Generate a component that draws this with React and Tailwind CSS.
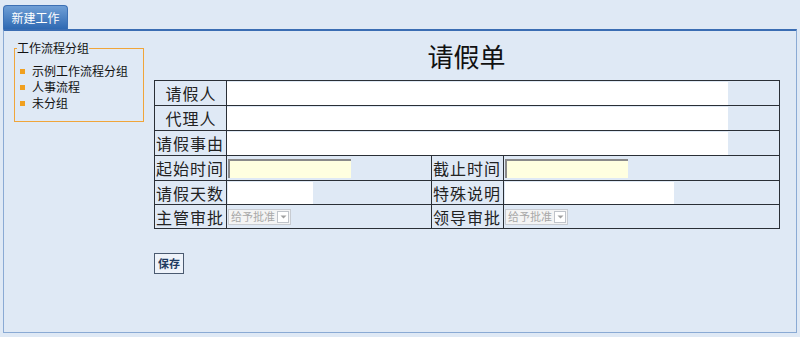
const FONT = "font-['Tahoma','Noto_Sans_CJK_SC',sans-serif]"

function ApproveSelect() {
  return (
    <div className="flex h-[16px] w-[63px] items-center border border-[#c8ccd2] bg-[#f4f4f4] text-[11px] leading-none text-[#a8a8a8]">
      <span className="flex-1 whitespace-nowrap pl-[2px]">给予批准</span>
      <span className="mr-[1px] flex h-[12px] w-[12px] items-center justify-center border border-[#c0c4ca] bg-white">
        <svg width="7" height="4" viewBox="0 0 7 4">
          <path d="M0.5 0.5 L3.5 3.5 L6.5 0.5 Z" fill="#a0a0a0" />
        </svg>
      </span>
    </div>
  )
}

function Label({ children, center }) {
  return (
    <td className={`overflow-hidden whitespace-nowrap border border-[#2a2f36] p-0 pl-[1px] text-[16px] leading-none tracking-[1px] text-[#222] ${center ? 'text-center' : 'text-left'}`}>
      {children}
    </td>
  )
}

export default function App() {
  return (
    <div className={`${FONT} h-[337px] w-[800px] overflow-hidden bg-[#dfe9f5] pt-[5px]`}>
      <div className="ml-[3px] flex h-[24px] w-[65px] items-center justify-center rounded-t-[4px] border border-b-0 border-[#3c70b4] bg-gradient-to-b from-[#6f9fd6] to-[#2e69b2] text-[12px] text-white">
        新建工作
      </div>
      <div className="mx-[3px] flex h-[304px] border border-t-2 border-[#8aaad4] border-t-[#3a6db3] bg-[#dfe9f5]">
        <div className="w-[150px] shrink-0 pl-[10px] pt-[9px]">
          <fieldset className="h-[82px] w-[130px] border border-[#f0a53a]">
            <legend className="ml-[2px] text-[12px] leading-[16px] text-[#111]">工作流程分组</legend>
            <ul className="mt-[7px] flex flex-col text-[12px] leading-[16px] text-[#111]">
              {['示例工作流程分组', '人事流程', '未分组'].map((t) => (
                <li key={t} className="flex items-center">
                  <span className="ml-[5px] mr-[7px] h-[5px] w-[5px] bg-[#f0a020]" />
                  {t}
                </li>
              ))}
            </ul>
          </fieldset>
        </div>

        <div className="w-[625px] shrink-0">
          <div className="h-[49px] pt-[10px] text-center text-[26px] leading-[30px] text-[#111]">请假单</div>
          <table className="w-[625px] table-fixed border-collapse">
            <colgroup>
              <col className="w-[72px]" />
              <col className="w-[205px]" />
              <col className="w-[72px]" />
              <col className="w-[276px]" />
            </colgroup>
            <tbody>
              {['请假人', '代理人', '请假事由'].map((t) => (
                <tr key={t} className="h-[25px]">
                  <Label center={t.length < 4}>{t}</Label>
                  <td colSpan={3} className="border border-[#2a2f36] p-0">
                    <div className="h-[23px] w-[501px] bg-white" />
                  </td>
                </tr>
              ))}
              <tr className="h-[25px]">
                <Label>起始时间</Label>
                <td className="border border-[#2a2f36] p-0 pl-[1px]">
                  <div className="h-[19px] w-[123px] border-l-2 border-t-2 border-[#8a8a8a] bg-[#ffffe0]" />
                </td>
                <Label>截止时间</Label>
                <td className="border border-[#2a2f36] p-0 pl-[1px]">
                  <div className="h-[19px] w-[123px] border-l-2 border-t-2 border-[#8a8a8a] bg-[#ffffe0]" />
                </td>
              </tr>
              <tr className="h-[24px]">
                <Label>请假天数</Label>
                <td className="border border-[#2a2f36] p-0 pl-[1px]">
                  <div className="h-[22px] w-[85px] bg-white" />
                </td>
                <Label>特殊说明</Label>
                <td className="border border-[#2a2f36] p-0 pl-[1px]">
                  <div className="h-[22px] w-[169px] bg-white" />
                </td>
              </tr>
              <tr className="h-[24px]">
                <Label>主管审批</Label>
                <td className="border border-[#2a2f36] p-0 pl-[1px]">
                  <ApproveSelect />
                </td>
                <Label>领导审批</Label>
                <td className="border border-[#2a2f36] p-0 pl-[1px]">
                  <ApproveSelect />
                </td>
              </tr>
            </tbody>
          </table>
          <button className="mt-[24px] flex h-[21px] w-[30px] items-center justify-center border border-[#4a5a70] bg-[#eef3fa] text-[11px] font-bold text-[#1e3a5f]">
            保存
          </button>
        </div>
      </div>
    </div>
  )
}
